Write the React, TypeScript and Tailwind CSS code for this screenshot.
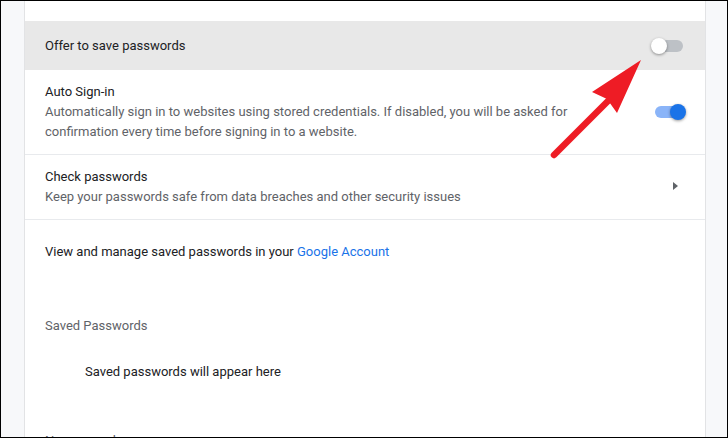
import * as React from "react"

interface ToggleProps {
  on?: boolean
}

function Toggle({ on = false }: ToggleProps) {
  return (
    <div className="relative w-[34px] h-4 shrink-0">
      <div
        className={
          on
            ? "absolute left-[3px] right-[2px] top-[2px] h-3 rounded-full bg-[#8ab4f8]"
            : "absolute left-[2px] right-[2px] top-[2px] h-3 rounded-full bg-[#bdc1c6]"
        }
      />
      <div
        className={
          on
            ? "absolute right-0 top-0 w-4 h-4 rounded-full bg-[#1a73e8] shadow-[0_1px_3px_rgba(0,0,0,0.4)]"
            : "absolute left-0 top-0 w-4 h-4 rounded-full bg-white shadow-[0_1px_3px_rgba(0,0,0,0.4)]"
        }
      />
    </div>
  )
}

export default function App() {
  return (
    <div className="relative w-[728px] h-[438px] overflow-hidden border border-black bg-[#f7f8fa] font-['Roboto',sans-serif] text-[13px] leading-5 text-[#202124]">
      <div className="flex h-full">
        {/* left gutter */}
        <div className="w-[23px] shrink-0" />

        {/* settings card */}
        <div className="w-[682px] shrink-0 bg-white border-x border-[#e2e3e5] pt-5">
          {/* Offer to save passwords (hovered) */}
          <div className="flex items-center justify-between h-[49px] pl-5 pr-[20px] bg-[#e8e8e8]">
            <span>Offer to save passwords</span>
            <Toggle />
          </div>

          {/* Auto Sign-in */}
          <div className="flex items-center justify-between h-[85px] pl-5 pr-[19px] border-b border-[#e8eaed]">
            <div className="max-w-[540px]">
              <div>Auto Sign-in</div>
              <div className="text-[#5f6368]">
                Automatically sign in to websites using stored credentials. If disabled, you will be asked for confirmation every time before signing in to a website.
              </div>
            </div>
            <Toggle on />
          </div>

          {/* Check passwords */}
          <div className="flex items-center justify-between h-[65px] pl-5 pr-[27px] border-b border-[#e8eaed]">
            <div>
              <div>Check passwords</div>
              <div className="text-[#5f6368]">
                Keep your passwords safe from data breaches and other security issues
              </div>
            </div>
            <svg width="5" height="8" viewBox="0 0 5 8" className="mt-[-2px]">
              <polygon points="0,0 5,4 0,8" fill="#5f6368" />
            </svg>
          </div>

          {/* Google account link */}
          <div className="flex items-center h-[63px] pl-5">
            <span>
              View and manage saved passwords in your{" "}
              <span className="text-[#1a73e8]">Google Account</span>
            </span>
          </div>

          {/* Saved Passwords */}
          <div className="pl-5 pt-[33px] text-[#5f6368]">Saved Passwords</div>
          <div className="pl-[60px] pt-[26px]">Saved passwords will appear here</div>

          {/* Never saved */}
          <div className="pl-5 pt-[49px] text-[#5f6368]">Never saved</div>
        </div>
      </div>

      {/* red annotation arrow */}
      <svg
        className="absolute left-0 top-0 pointer-events-none"
        width="728"
        height="438"
        viewBox="0 0 728 438"
      >
        <line
          x1="553"
          y1="154"
          x2="608"
          y2="99"
          stroke="#ee1c25"
          strokeWidth="6.5"
          strokeLinecap="round"
        />
        <polygon points="640,59 591,91 606,98 616,112" fill="#ee1c25" />
      </svg>
    </div>
  )
}
